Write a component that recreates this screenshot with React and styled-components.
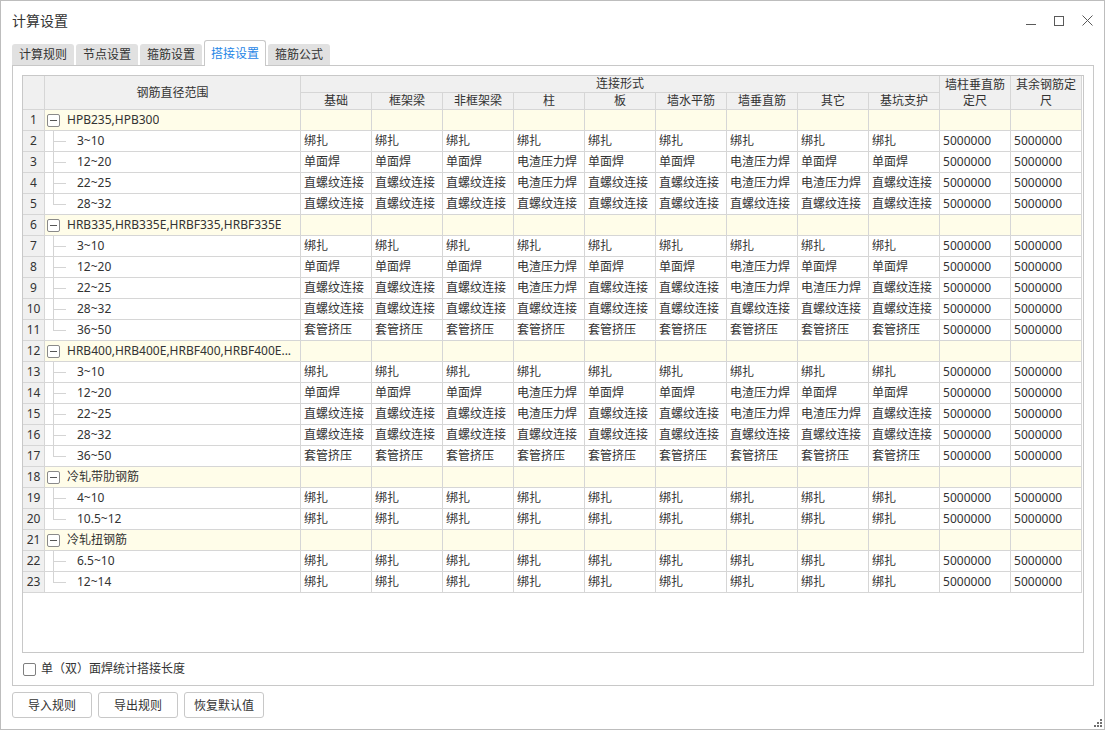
import React from 'react';
import styled, { createGlobalStyle } from 'styled-components';

const Global = createGlobalStyle`
  html, body { margin: 0; padding: 0; background: #fff; }
  body {
    font-family: "Noto Sans", "Noto Sans CJK SC", sans-serif;
    font-size: 12px;
    color: #333;
  }
  * { box-sizing: border-box; }
`;

const Window = styled.div`
  position: relative;
  width: 1105px;
  height: 730px;
  border: 1px solid #bdbdbd;
  background: #fff;
  display: flex;
  flex-direction: column;
  padding: 0 10px 0 11px;
`;

const TitleBar = styled.div`
  height: 39px;
  display: flex;
  align-items: center;
  justify-content: space-between;
`;

const Title = styled.div`
  font-size: 14px;
  line-height: 20px;
  color: #333;
`;

const Controls = styled.div`
  display: flex;
  align-items: center;
  gap: 18px;
  margin-right: 1px;
`;

const CtrlIcon = styled.svg`
  display: block;
  stroke: #5a5a5a;
  fill: none;
  stroke-width: 1;
`;

const TabStrip = styled.div`
  height: 25px;
  display: flex;
  align-items: flex-end;
  gap: 2px;
`;

const Tab = styled.div`
  position: relative;
  z-index: ${p => (p.$active ? 1 : 0)};
  height: ${p => (p.$active ? '26px' : '21px')};
  margin-bottom: ${p => (p.$active ? '-1px' : '0')};
  padding: ${p => (p.$active ? '0 6px' : '0 7px')};
  border: ${p => (p.$active ? '1px solid #c8c8c8' : 'none')};
  border-bottom: none;
  border-radius: 3px 3px 0 0;
  background: ${p => (p.$active ? '#fff' : '#e1e1e1')};
  color: ${p => (p.$active ? '#1f86e6' : '#333')};
  display: flex;
  align-items: center;
  line-height: 16px;
  white-space: nowrap;
`;

const Panel = styled.div`
  height: 621px;
  border: 1px solid #c8c8c8;
  padding: 9px 9px 0;
  display: flex;
  flex-direction: column;
`;

const GridBox = styled.div`
  height: 578px;
  border: 1px solid #c8c8c8;
  background: #fff;
  overflow: hidden;
`;

const Table = styled.table`
  width: 1059px;
  table-layout: fixed;
  border-collapse: separate;
  border-spacing: 0;
`;

const Th = styled.th`
  padding: 0;
  font-weight: normal;
  text-align: center;
  vertical-align: middle;
  line-height: 16px;
  background: #f0f0f0;
  border-right: 1px solid #d6d6d6;
  border-bottom: 1px solid #d6d6d6;
  color: #333;
  white-space: ${p => (p.$wrap ? 'normal' : 'nowrap')};
  overflow: hidden;
`;

const Td = styled.td`
  padding: 0 3px;
  line-height: 20px;
  height: 21px;
  border-right: 1px solid #d6d6d6;
  border-bottom: 1px solid #d6d6d6;
  background: ${p => (p.$group ? '#fffde9' : '#fff')};
  white-space: nowrap;
  overflow: hidden;
  color: #333;
`;

const NumTd = styled(Td)`
  padding: 0;
  text-align: center;
  background: #f0f0f0;
`;

const TreeTd = styled(Td)`
  padding: 0;
`;

const TreeInner = styled.div`
  display: flex;
  align-items: center;
  height: 20px;
  overflow: hidden;
`;

const MinusBox = styled.span`
  flex: none;
  width: 13px;
  height: 13px;
  margin-left: 2px;
  border: 1px solid #8a8a8a;
  border-radius: 2px;
  background: #fff;
  display: flex;
  align-items: center;
  justify-content: center;
  &::before {
    content: '';
    width: 7px;
    height: 1px;
    background: #555;
  }
`;

const GroupLabel = styled.span`
  margin-left: 7px;
  white-space: nowrap;
  overflow: hidden;
`;

const Guide = styled.span`
  flex: none;
  align-self: stretch;
  width: 13px;
  margin-left: 8px;
  background:
    linear-gradient(#d4d4d4, #d4d4d4) left top / 1px ${p => (p.$last ? '10px' : '100%')} no-repeat,
    linear-gradient(#d4d4d4, #d4d4d4) left 10px / 100% 1px no-repeat;
`;

const ChildLabel = styled.span`
  margin-left: 11px;
`;

const CheckRow = styled.div`
  height: 32px;
  display: flex;
  align-items: center;
  padding-left: 1px;
`;

const CheckBox = styled.span`
  width: 13px;
  height: 13px;
  border: 1px solid #7f7f7f;
  border-radius: 2px;
  background: #fff;
`;

const CheckLabel = styled.span`
  margin-left: 5px;
  line-height: 16px;
`;

const ButtonRow = styled.div`
  margin-top: 6px;
  display: flex;
  gap: 6px;
`;

const Button = styled.button`
  width: 80px;
  height: 26px;
  padding: 0;
  border: 1px solid #c8c8c8;
  border-radius: 3px;
  background: #fff;
  font-family: inherit;
  font-size: 12px;
  color: #333;
`;

const Grip = styled.svg`
  position: absolute;
  right: 1px;
  bottom: 1px;
  fill: #6f6f6f;
`;

const BZ = Array(9).fill('绑扎');
const DMH = ['单面焊', '单面焊', '单面焊', '电渣压力焊', '单面焊', '单面焊', '电渣压力焊', '单面焊', '单面焊'];
const ZLW = ['直螺纹连接', '直螺纹连接', '直螺纹连接', '电渣压力焊', '直螺纹连接', '直螺纹连接', '电渣压力焊', '电渣压力焊', '直螺纹连接'];
const ALLZ = Array(9).fill('直螺纹连接');
const TG = Array(9).fill('套管挤压');

const GROUPS = [
  { name: 'HPB235,HPB300', items: [['3~10', BZ], ['12~20', DMH], ['22~25', ZLW], ['28~32', ALLZ]] },
  { name: 'HRB335,HRB335E,HRBF335,HRBF335E', items: [['3~10', BZ], ['12~20', DMH], ['22~25', ZLW], ['28~32', ALLZ], ['36~50', TG]] },
  { name: 'HRB400,HRB400E,HRBF400,HRBF400E...', items: [['3~10', BZ], ['12~20', DMH], ['22~25', ZLW], ['28~32', ALLZ], ['36~50', TG]] },
  { name: '冷轧带肋钢筋', items: [['4~10', BZ], ['10.5~12', BZ]] },
  { name: '冷轧扭钢筋', items: [['6.5~10', BZ], ['12~14', BZ]] },
];

const SUBHEAD = ['基础', '框架梁', '非框架梁', '柱', '板', '墙水平筋', '墙垂直筋', '其它', '基坑支护'];
const TABS = ['计算规则', '节点设置', '箍筋设置', '搭接设置', '箍筋公式'];

function buildRows() {
  const rows = [];
  let n = 1;
  GROUPS.forEach((g, gi) => {
    rows.push(
      <tr key={`g${gi}`}>
        <NumTd>{n++}</NumTd>
        <TreeTd $group>
          <TreeInner>
            <MinusBox />
            <GroupLabel>{g.name}</GroupLabel>
          </TreeInner>
        </TreeTd>
        {Array.from({ length: 11 }).map((_, i) => (
          <Td key={i} $group />
        ))}
      </tr>
    );
    g.items.forEach(([range, vals], ii) => {
      rows.push(
        <tr key={`g${gi}-${ii}`}>
          <NumTd>{n++}</NumTd>
          <TreeTd>
            <TreeInner>
              <Guide $last={ii === g.items.length - 1} />
              <ChildLabel>{range}</ChildLabel>
            </TreeInner>
          </TreeTd>
          {vals.map((v, i) => (
            <Td key={i}>{v}</Td>
          ))}
          <Td>5000000</Td>
          <Td>5000000</Td>
        </tr>
      );
    });
  });
  return rows;
}

export default function App() {
  return (
    <>
      <Global />
      <Window>
        <TitleBar>
          <Title>计算设置</Title>
          <Controls>
            <CtrlIcon width="10" height="10" viewBox="0 0 10 10">
              <line x1="0" y1="8.5" x2="10" y2="8.5" />
            </CtrlIcon>
            <CtrlIcon width="10" height="10" viewBox="0 0 10 10">
              <rect x="0.5" y="0.5" width="9" height="9" />
            </CtrlIcon>
            <CtrlIcon width="11" height="11" viewBox="0 0 11 11">
              <line x1="0.5" y1="0.5" x2="10.5" y2="10.5" />
              <line x1="10.5" y1="0.5" x2="0.5" y2="10.5" />
            </CtrlIcon>
          </Controls>
        </TitleBar>

        <TabStrip>
          {TABS.map(t => (
            <Tab key={t} $active={t === '搭接设置'}>{t}</Tab>
          ))}
        </TabStrip>

        <Panel>
          <GridBox>
            <Table>
              <colgroup>
                <col style={{ width: 22 }} />
                <col style={{ width: 256 }} />
                {Array.from({ length: 11 }).map((_, i) => (
                  <col key={i} style={{ width: 71 }} />
                ))}
              </colgroup>
              <thead>
                <tr>
                  <Th rowSpan={2} />
                  <Th rowSpan={2}>钢筋直径范围</Th>
                  <Th colSpan={9}>连接形式</Th>
                  <Th rowSpan={2} $wrap>墙柱垂直筋定尺</Th>
                  <Th rowSpan={2} $wrap>其余钢筋定尺</Th>
                </tr>
                <tr>
                  {SUBHEAD.map(h => (
                    <Th key={h}>{h}</Th>
                  ))}
                </tr>
              </thead>
              <tbody>{buildRows()}</tbody>
            </Table>
          </GridBox>
          <CheckRow>
            <CheckBox />
            <CheckLabel>单（双）面焊统计搭接长度</CheckLabel>
          </CheckRow>
        </Panel>

        <ButtonRow>
          <Button>导入规则</Button>
          <Button>导出规则</Button>
          <Button>恢复默认值</Button>
        </ButtonRow>

        <Grip width="10" height="10" viewBox="0 0 10 10">
          <rect x="7" y="1" width="2" height="2" />
          <rect x="4" y="4" width="2" height="2" />
          <rect x="7" y="4" width="2" height="2" />
          <rect x="1" y="7" width="2" height="2" />
          <rect x="4" y="7" width="2" height="2" />
          <rect x="7" y="7" width="2" height="2" />
        </Grip>
      </Window>
    </>
  );
}
